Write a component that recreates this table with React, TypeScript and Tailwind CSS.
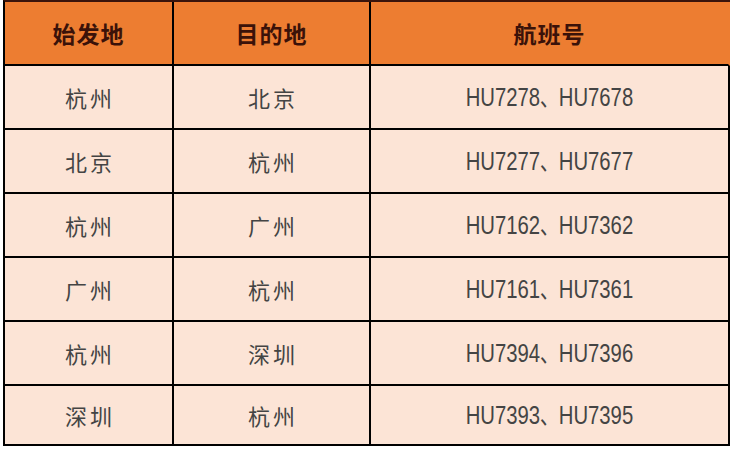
import React from "react";

const rows: [string, string, string, string][] = [
  ["杭州", "北京", "HU7278", "HU7678"],
  ["北京", "杭州", "HU7277", "HU7677"],
  ["杭州", "广州", "HU7162", "HU7362"],
  ["广州", "杭州", "HU7161", "HU7361"],
  ["杭州", "深圳", "HU7394", "HU7396"],
  ["深圳", "杭州", "HU7393", "HU7395"],
];

const cjk = "font-['Noto_Sans_CJK_SC','Noto_Sans',sans-serif]";

export default function App() {
  return (
    <div className="w-[736px] h-[450px] bg-white pl-[3px]">
      <div className="grid grid-cols-[169px_197px_359px] w-[727px] border-l-2 border-t-2 border-l-black border-t-[#3a140c]">
        {["始发地", "目的地", "航班号"].map((h, i) => (
          <div
            key={h}
            className={`h-[64px] flex items-center justify-center bg-[#ED7D31] border-b-2 border-b-black border-r-2 ${i === 2 ? "border-r-[#ED7D31]" : "border-r-black"}`}
          >
            <span className={`${cjk} text-[23px] font-bold text-[#3b1209] tracking-[1px]`}>{h}</span>
          </div>
        ))}
        {rows.map((r, ri) => {
          const h = ri === rows.length - 1 ? "h-[60px]" : "h-[64px]";
          return (
            <React.Fragment key={ri}>
              <div className={`${h} flex items-center justify-center bg-[#FCE4D6] border-r-2 border-b-2 border-black`}>
                <span className={`${cjk} text-[22px] text-[#444] tracking-[3px] pl-[3px]`}>{r[0]}</span>
              </div>
              <div className={`${h} flex items-center justify-center bg-[#FCE4D6] border-r-2 border-b-2 border-black`}>
                <span className={`${cjk} text-[22px] text-[#444] tracking-[3px] pl-[3px]`}>{r[1]}</span>
              </div>
              <div className={`${h} flex items-center justify-center bg-[#FCE4D6] border-r-2 border-b-2 border-black`}>
                <span className="inline-block scale-x-[0.78] whitespace-nowrap font-['Liberation_Sans',sans-serif] text-[26px] text-[#444] leading-none">
                  {r[2]}
                  <span className={`${cjk} text-[24px]`}>、</span>
                  {r[3]}
                </span>
              </div>
            </React.Fragment>
          );
        })}
      </div>
    </div>
  );
}
